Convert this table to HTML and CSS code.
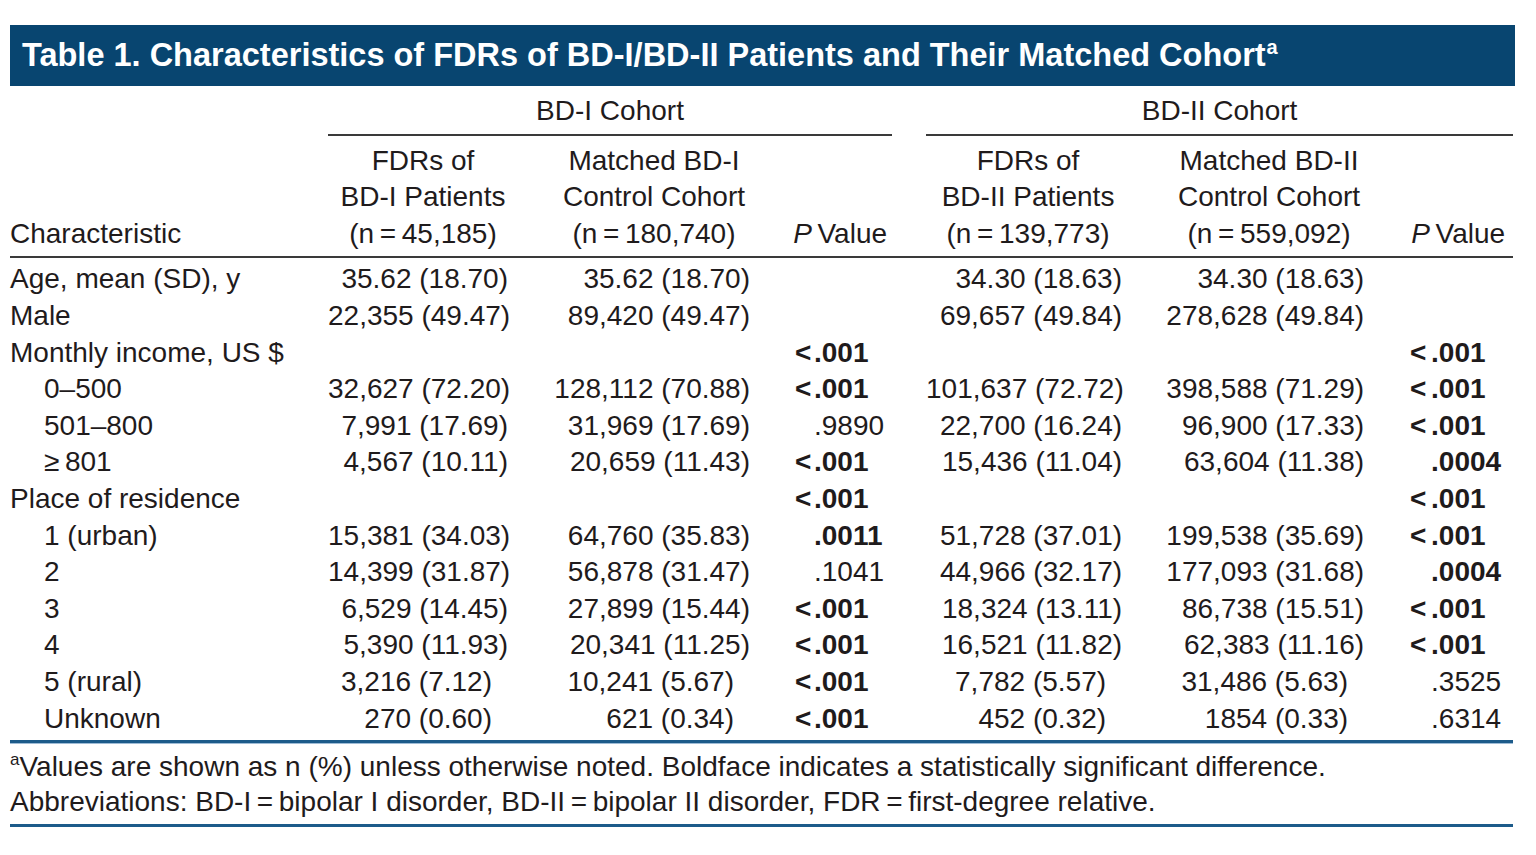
FILE: index.html
```html
<!DOCTYPE html>
<html lang="en">
<head>
<meta charset="utf-8">
<title>Table 1</title>
<link rel="stylesheet" href="styles.css">
</head>
<body>
<div class="page">
  <div class="title-bar">Table 1. Characteristics of FDRs of BD-I/BD-II Patients and Their Matched Cohort<sup class="fn">a</sup></div>
  <table class="tbl">
    <colgroup>
      <col class="c-char">
      <col class="c-1">
      <col class="c-2">
      <col class="c-p1">
      <col class="c-gap">
      <col class="c-4">
      <col class="c-5">
      <col class="c-p2">
    </colgroup>
    <thead>
      <tr class="group-row">
        <th></th>
        <th colspan="3" class="group">BD-I Cohort</th>
        <th></th>
        <th colspan="3" class="group">BD-II Cohort</th>
      </tr>
      <tr class="head-row">
        <th class="h-char">Characteristic</th>
        <th class="h-col">FDRs of<br>BD-I Patients<br>(n&#8201;=&#8201;45,185)</th>
        <th class="h-col">Matched BD-I<br>Control Cohort<br>(n&#8201;=&#8201;180,740)</th>
        <th class="h-p h-p1"><i>P</i>&#8201;Value</th>
        <th></th>
        <th class="h-col">FDRs of<br>BD-II Patients<br>(n&#8201;=&#8201;139,773)</th>
        <th class="h-col">Matched BD-II<br>Control Cohort<br>(n&#8201;=&#8201;559,092)</th>
        <th class="h-p h-p2"><i>P</i>&#8201;Value</th>
      </tr>
    </thead>
    <tbody>
      <tr class="first">
        <td class="lab">Age, mean (SD), y</td>
        <td class="num n1">35.62 (18.70)</td>
        <td class="num n2">35.62 (18.70)</td>
        <td class="pv pv1"></td>
        <td></td>
        <td class="num n4">34.30 (18.63)</td>
        <td class="num n5">34.30 (18.63)</td>
        <td class="pv pv2"></td>
      </tr>
      <tr>
        <td class="lab">Male</td>
        <td class="num n1">22,355 (49.47)</td>
        <td class="num n2">89,420 (49.47)</td>
        <td class="pv pv1"></td>
        <td></td>
        <td class="num n4">69,657 (49.84)</td>
        <td class="num n5">278,628 (49.84)</td>
        <td class="pv pv2"></td>
      </tr>
      <tr>
        <td class="lab">Monthly income, US $</td>
        <td class="num n1"></td>
        <td class="num n2"></td>
        <td class="pv pv1"><b><span class="lt">&lt;</span>.001</b></td>
        <td></td>
        <td class="num n4"></td>
        <td class="num n5"></td>
        <td class="pv pv2"><b><span class="lt">&lt;</span>.001</b></td>
      </tr>
      <tr>
        <td class="lab sub">0–500</td>
        <td class="num n1">32,627 (72.20)</td>
        <td class="num n2">128,112 (70.88)</td>
        <td class="pv pv1"><b><span class="lt">&lt;</span>.001</b></td>
        <td></td>
        <td class="num n4">101,637 (72.72)</td>
        <td class="num n5">398,588 (71.29)</td>
        <td class="pv pv2"><b><span class="lt">&lt;</span>.001</b></td>
      </tr>
      <tr>
        <td class="lab sub">501–800</td>
        <td class="num n1">7,991 (17.69)</td>
        <td class="num n2">31,969 (17.69)</td>
        <td class="pv pv1"><span class="lt"></span>.9890</td>
        <td></td>
        <td class="num n4">22,700 (16.24)</td>
        <td class="num n5">96,900 (17.33)</td>
        <td class="pv pv2"><b><span class="lt">&lt;</span>.001</b></td>
      </tr>
      <tr>
        <td class="lab sub">≥&#8201;801</td>
        <td class="num n1">4,567 (10.11)</td>
        <td class="num n2">20,659 (11.43)</td>
        <td class="pv pv1"><b><span class="lt">&lt;</span>.001</b></td>
        <td></td>
        <td class="num n4">15,436 (11.04)</td>
        <td class="num n5">63,604 (11.38)</td>
        <td class="pv pv2"><b><span class="lt"></span>.0004</b></td>
      </tr>
      <tr>
        <td class="lab">Place of residence</td>
        <td class="num n1"></td>
        <td class="num n2"></td>
        <td class="pv pv1"><b><span class="lt">&lt;</span>.001</b></td>
        <td></td>
        <td class="num n4"></td>
        <td class="num n5"></td>
        <td class="pv pv2"><b><span class="lt">&lt;</span>.001</b></td>
      </tr>
      <tr>
        <td class="lab sub">1 (urban)</td>
        <td class="num n1">15,381 (34.03)</td>
        <td class="num n2">64,760 (35.83)</td>
        <td class="pv pv1"><b><span class="lt"></span>.0011</b></td>
        <td></td>
        <td class="num n4">51,728 (37.01)</td>
        <td class="num n5">199,538 (35.69)</td>
        <td class="pv pv2"><b><span class="lt">&lt;</span>.001</b></td>
      </tr>
      <tr>
        <td class="lab sub">2</td>
        <td class="num n1">14,399 (31.87)</td>
        <td class="num n2">56,878 (31.47)</td>
        <td class="pv pv1"><span class="lt"></span>.1041</td>
        <td></td>
        <td class="num n4">44,966 (32.17)</td>
        <td class="num n5">177,093 (31.68)</td>
        <td class="pv pv2"><b><span class="lt"></span>.0004</b></td>
      </tr>
      <tr>
        <td class="lab sub">3</td>
        <td class="num n1">6,529 (14.45)</td>
        <td class="num n2">27,899 (15.44)</td>
        <td class="pv pv1"><b><span class="lt">&lt;</span>.001</b></td>
        <td></td>
        <td class="num n4">18,324 (13.11)</td>
        <td class="num n5">86,738 (15.51)</td>
        <td class="pv pv2"><b><span class="lt">&lt;</span>.001</b></td>
      </tr>
      <tr>
        <td class="lab sub">4</td>
        <td class="num n1">5,390 (11.93)</td>
        <td class="num n2">20,341 (11.25)</td>
        <td class="pv pv1"><b><span class="lt">&lt;</span>.001</b></td>
        <td></td>
        <td class="num n4">16,521 (11.82)</td>
        <td class="num n5">62,383 (11.16)</td>
        <td class="pv pv2"><b><span class="lt">&lt;</span>.001</b></td>
      </tr>
      <tr>
        <td class="lab sub">5 (rural)</td>
        <td class="num n1 s">3,216 (7.12)</td>
        <td class="num n2 s">10,241 (5.67)</td>
        <td class="pv pv1"><b><span class="lt">&lt;</span>.001</b></td>
        <td></td>
        <td class="num n4 s">7,782 (5.57)</td>
        <td class="num n5 s">31,486 (5.63)</td>
        <td class="pv pv2"><span class="lt"></span>.3525</td>
      </tr>
      <tr class="last">
        <td class="lab sub">Unknown</td>
        <td class="num n1 s">270 (0.60)</td>
        <td class="num n2 s">621 (0.34)</td>
        <td class="pv pv1"><b><span class="lt">&lt;</span>.001</b></td>
        <td></td>
        <td class="num n4 s">452 (0.32)</td>
        <td class="num n5 s">1854 (0.33)</td>
        <td class="pv pv2"><span class="lt"></span>.6314</td>
      </tr>
    </tbody>
  </table>
  <div class="notes">
    <p><sup class="fn">a</sup>Values are shown as n (%) unless otherwise noted. Boldface indicates a statistically significant difference.</p>
    <p>Abbreviations: BD-I&#8201;=&#8201;bipolar I disorder, BD-II&#8201;=&#8201;bipolar II disorder, FDR&#8201;=&#8201;first-degree relative.</p>
  </div>
</div>
</body>
</html>
```
FILE: styles.css
```css
html, body {
  margin: 0;
  padding: 0;
  background: #ffffff;
}

body {
  font-family: "Liberation Sans", Arial, sans-serif;
  color: #1f1b1c;
}

.page {
  padding: 25px 21px 0 10px;
  width: 1505px;
}

.title-bar {
  background: #084570;
  color: #ffffff;
  font-weight: bold;
  font-size: 32.5px;
  height: 61px;
  line-height: 61px;
  padding-left: 12px;
  white-space: nowrap;
  box-sizing: border-box;
  width: 1505px;
}

.title-bar .fn {
  font-size: 20px;
  line-height: 0;
  vertical-align: 0;
  position: relative;
  top: -12px;
  margin-left: 1px;
}

.tbl {
  table-layout: fixed;
  border-collapse: collapse;
  width: 1503px;
  font-size: 28px;
  line-height: 36.6px;
  margin-top: 7px;
}

.c-char { width: 318px; }
.c-1 { width: 190px; }
.c-2 { width: 272px; }
.c-p1 { width: 102px; }
.c-gap { width: 34px; }
.c-4 { width: 204px; }
.c-5 { width: 278px; }
.c-p2 { width: 105px; }

th {
  font-weight: normal;
  padding: 0;
  white-space: nowrap;
}

.group-row th {
  padding-bottom: 4px;
  vertical-align: bottom;
}

.group {
  text-align: center;
  border-bottom: 2px solid #3a3a3a;
}

.head-row th {
  vertical-align: bottom;
  padding-top: 7px;
  padding-bottom: 4px;
  border-bottom: 2px solid #3a3a3a;
}

.h-char {
  text-align: left;
}

.h-col {
  text-align: center;
}

.h-p {
  text-align: right;
}

.h-p1 { padding-right: 5px !important; }
.h-p2 { padding-right: 8px !important; }

td {
  padding: 0;
  white-space: nowrap;
  height: 36.6px;
}

tbody tr.first td {
  padding-top: 3px;
}

tbody tr.last td {
  padding-bottom: 3px;
  border-bottom: 3px solid #1d5b8a;
}

.lab {
  text-align: left;
}

.sub {
  padding-left: 34px;
}

.num {
  text-align: right;
}

.n1 { padding-right: 10px; }
.n2 { padding-right: 40px; }
.n4 { padding-right: 8px; }
.n5 { padding-right: 44px; }

.n1.s { padding-right: 26px; }
.n2.s { padding-right: 56px; }
.n4.s { padding-right: 24px; }
.n5.s { padding-right: 60px; }

.pv {
  text-align: left;
}

.pv1 { padding-left: 5px; }
.pv2 { padding-left: 2px; }

.lt {
  display: inline-block;
  width: 19px;
}

.pv2 .lt {
  width: 21px;
}

.notes {
  border-top: 1px solid #9fbcd6;
  border-bottom: 3px solid #1d5b8a;
  box-shadow: 0 1px 0 #9fbcd6;
  width: 1503px;
  padding: 5px 0 5px;
  font-size: 28px;
  line-height: 35px;
}

.notes p {
  margin: 0;
  white-space: nowrap;
}

.notes .fn {
  font-size: 17px;
  line-height: 0;
  vertical-align: 0;
  position: relative;
  top: -11px;
}
```
